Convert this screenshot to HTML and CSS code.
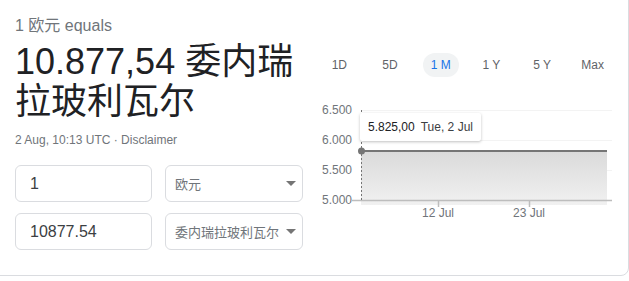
FILE: index.html
```html
<!DOCTYPE html>
<html>
<head>
<meta charset="utf-8">
<link rel="stylesheet" href="styles.css">
</head>
<body>
<div class="card">
  <div class="left">
    <div class="equals">1 欧元 equals</div>
    <div class="result">10.877,54 委内瑞拉玻利瓦尔</div>
    <div class="meta">2 Aug, 10:13 UTC · <span>Disclaimer</span></div>
    <div class="rows">
      <div class="row">
        <div class="field input">1</div>
        <div class="field select"><span>欧元</span><i class="caret"></i></div>
      </div>
      <div class="row">
        <div class="field input">10877.54</div>
        <div class="field select"><span>委内瑞拉玻利瓦尔</span><i class="caret"></i></div>
      </div>
    </div>
  </div>
  <div class="right">
    <div class="tabs">
      <div class="tab"><span>1D</span></div>
      <div class="tab"><span>5D</span></div>
      <div class="tab active"><span>1 M</span></div>
      <div class="tab"><span>1 Y</span></div>
      <div class="tab"><span>5 Y</span></div>
      <div class="tab"><span>Max</span></div>
    </div>
    <div class="chart">
      <svg width="304" height="130" viewBox="0 0 304 130">
        <defs>
          <linearGradient id="fillg" x1="0" y1="0" x2="0" y2="1">
            <stop offset="0" stop-color="#dadada"/>
            <stop offset="1" stop-color="#f1f1f1"/>
          </linearGradient>
        </defs>
        <g class="grid" stroke="#f3f3f3" stroke-width="1">
          <line x1="47" y1="14.5" x2="298" y2="14.5"/>
          <line x1="47" y1="44.5" x2="298" y2="44.5"/>
          <line x1="47" y1="74.5" x2="298" y2="74.5"/>
        </g>
        <rect x="47" y="55" width="246" height="54" fill="url(#fillg)"/>
        <line x1="38" y1="104.5" x2="298" y2="104.5" stroke="#bdbdbd" stroke-width="1.5"/>
        <line x1="124.5" y1="104" x2="124.5" y2="111" stroke="#bdbdbd" stroke-width="1.5"/>
        <line x1="215.5" y1="104" x2="215.5" y2="111" stroke="#bdbdbd" stroke-width="1.5"/>
        <line x1="47.5" y1="14" x2="47.5" y2="104" stroke="#757575" stroke-width="1" stroke-dasharray="2 2"/>
        <line x1="47" y1="55" x2="293" y2="55" stroke="#757575" stroke-width="2"/>
        <circle cx="47.5" cy="55" r="3.5" fill="#757575"/>
        <g class="ylab" font-size="12" fill="#70757a" text-anchor="end">
          <text x="38" y="18">6.500</text>
          <text x="38" y="48">6.000</text>
          <text x="38" y="78">5.500</text>
          <text x="38" y="108">5.000</text>
        </g>
        <g class="xlab" font-size="12" fill="#70757a" text-anchor="middle">
          <text x="124" y="121">12 Jul</text>
          <text x="215" y="121">23 Jul</text>
        </g>
      </svg>
      <div class="tooltip"><b>5.825,00</b><span>Tue, 2 Jul</span></div>
    </div>
  </div>
</div>
</body>
</html>
```

FILE: styles.css
```css
html, body {
  margin: 0;
  padding: 0;
  background: #fff;
  overflow: hidden;
}
body {
  font-family: "Liberation Sans", Arial, "Noto Sans CJK SC", sans-serif;
  color: #202124;
}
.card {
  box-sizing: border-box;
  margin: -10px 0 0 -10px;
  width: 639px;
  height: 286px;
  border: 1px solid #dadce0;
  border-radius: 8px;
  padding: 25px 0 0 24px;
  display: flex;
  gap: 11px;
}
.left {
  width: 288px;
  display: flex;
  flex-direction: column;
}
.equals {
  font-size: 16px;
  line-height: 20px;
  color: #70757a;
}
.result {
  margin-top: 6px;
  font-size: 36px;
  line-height: 40px;
  color: #202124;
}
.meta {
  margin-top: 10px;
  font-size: 12px;
  line-height: 16px;
  color: #70757a;
}
.rows {
  margin-top: 17px;
  display: flex;
  flex-direction: column;
  gap: 11px;
}
.row {
  display: flex;
  gap: 13px;
}
.field {
  box-sizing: border-box;
  height: 37px;
  border: 1px solid #dadce0;
  border-radius: 6px;
  display: flex;
  align-items: center;
}
.input {
  width: 137px;
  padding-left: 14px;
  font-size: 16px;
  color: #3c4043;
}
.select {
  width: 138px;
  padding: 0 6px 0 9px;
  justify-content: space-between;
  font-size: 13px;
  color: #70757a;
  font-family: "Noto Sans CJK SC", "Liberation Sans", sans-serif;
}
.caret {
  width: 0;
  height: 0;
  border-left: 5px solid transparent;
  border-right: 5px solid transparent;
  border-top: 5px solid #757575;
}
.right {
  width: 304px;
  display: flex;
  flex-direction: column;
}
.tabs {
  margin-top: 37px;
  display: flex;
  height: 24px;
}
.tab {
  flex: 1;
  display: flex;
  justify-content: center;
  align-items: center;
  font-size: 12px;
  color: #5f6368;
}
.tab span {
  display: flex;
  align-items: center;
  justify-content: center;
  height: 24px;
  padding: 0 8px;
  border-radius: 12px;
}
.tab.active span {
  background: #f1f3f4;
  color: #1a73e8;
  min-width: 18px;
}
.chart {
  position: relative;
  margin-top: 19px;
  height: 130px;
}
.chart svg {
  display: block;
  font-family: "Liberation Sans", Arial, sans-serif;
}
.tooltip {
  position: absolute;
  left: 46px;
  top: 17px;
  height: 28px;
  padding: 0 8px;
  display: flex;
  align-items: center;
  gap: 6px;
  background: #fff;
  border-radius: 2px;
  box-shadow: 0 1px 3px rgba(0,0,0,0.25);
  font-size: 12px;
  white-space: nowrap;
}
.tooltip b {
  font-weight: normal;
  color: #202124;
}
.tooltip span {
  color: #3c4043;
}
```
